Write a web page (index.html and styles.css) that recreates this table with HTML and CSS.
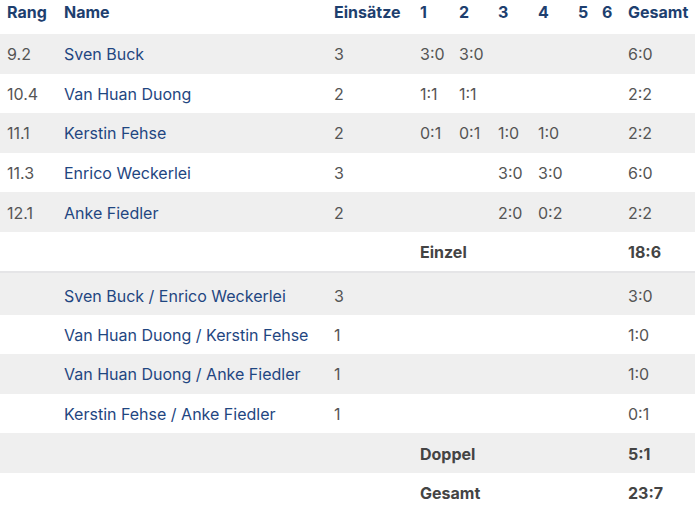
FILE: index.html
```html
<!DOCTYPE html>
<html lang="de">
<head>
<meta charset="utf-8">
<title>Bilanz</title>
<link rel="stylesheet" href="styles.css">
</head>
<body>
<table class="stats">
  <colgroup>
    <col class="c-rang"><col class="c-name"><col class="c-eins">
    <col class="c-s"><col class="c-s"><col class="c-s3"><col class="c-s3"><col class="c-s5"><col class="c-s6"><col class="c-ges">
  </colgroup>
  <thead>
    <tr><th>Rang</th><th>Name</th><th>Einsätze</th><th>1</th><th>2</th><th>3</th><th>4</th><th>5</th><th>6</th><th>Gesamt</th></tr>
  </thead>
  <tbody>
    <tr class="alt"><td>9.2</td><td class="name">Sven Buck</td><td>3</td><td>3:0</td><td>3:0</td><td></td><td></td><td></td><td></td><td>6:0</td></tr>
    <tr><td>10.4</td><td class="name">Van Huan Duong</td><td>2</td><td>1:1</td><td>1:1</td><td></td><td></td><td></td><td></td><td>2:2</td></tr>
    <tr class="alt"><td>11.1</td><td class="name">Kerstin Fehse</td><td>2</td><td>0:1</td><td>0:1</td><td>1:0</td><td>1:0</td><td></td><td></td><td>2:2</td></tr>
    <tr><td>11.3</td><td class="name">Enrico Weckerlei</td><td>3</td><td></td><td></td><td>3:0</td><td>3:0</td><td></td><td></td><td>6:0</td></tr>
    <tr class="alt"><td>12.1</td><td class="name">Anke Fiedler</td><td>2</td><td></td><td></td><td>2:0</td><td>0:2</td><td></td><td></td><td>2:2</td></tr>
    <tr class="sum"><td></td><td></td><td></td><td colspan="6">Einzel</td><td>18:6</td></tr>
  </tbody>
  <tbody class="group">
    <tr class="alt first"><td></td><td class="name">Sven Buck / Enrico Weckerlei</td><td>3</td><td></td><td></td><td></td><td></td><td></td><td></td><td>3:0</td></tr>
    <tr><td></td><td class="name">Van Huan Duong / Kerstin Fehse</td><td>1</td><td></td><td></td><td></td><td></td><td></td><td></td><td>1:0</td></tr>
    <tr class="alt"><td></td><td class="name">Van Huan Duong / Anke Fiedler</td><td>1</td><td></td><td></td><td></td><td></td><td></td><td></td><td>1:0</td></tr>
    <tr><td></td><td class="name">Kerstin Fehse / Anke Fiedler</td><td>1</td><td></td><td></td><td></td><td></td><td></td><td></td><td>0:1</td></tr>
    <tr class="sum alt"><td></td><td></td><td></td><td colspan="6">Doppel</td><td>5:1</td></tr>
    <tr class="sum"><td></td><td></td><td></td><td colspan="6">Gesamt</td><td>23:7</td></tr>
  </tbody>
</table>
</body>
</html>
```
FILE: styles.css
```css
html, body {
  margin: 0;
  padding: 0;
  background: #fff;
}
body {
  font-family: Inter, "Noto Sans", sans-serif;
  font-size: 16px;
  color: #555;
}
.stats {
  width: 695px;
  border-collapse: collapse;
  table-layout: fixed;
}
.c-rang { width: 57px; }
.c-name { width: 270px; }
.c-eins { width: 86px; }
.c-s { width: 39px; }
.c-s3 { width: 40px; }
.c-s5 { width: 24px; }
.c-s6 { width: 26px; }
.c-ges { width: 74px; }
.stats th, .stats td {
  text-align: left;
  padding: 0 0 0 7px;
  white-space: nowrap;
  overflow: visible;
}
.stats th {
  height: 34px;
  padding-bottom: 10px;
  box-sizing: border-box;
  font-weight: 700;
  color: #1e3f6f;
  font-size: 16px;
}
.stats td {
  height: 39.6px;
  padding-top: 1px;
  box-sizing: border-box;
}
.stats tr.first td {
  height: 43px;
  padding-top: 4px;
}
.stats tr.alt td {
  background: #efefef;
}
.stats td.name {
  color: #1f4681;
}
.stats tr.sum td {
  font-weight: 700;
  color: #444;
}
.group {
  border-top: 2px solid #e5e5e7;
}
```
